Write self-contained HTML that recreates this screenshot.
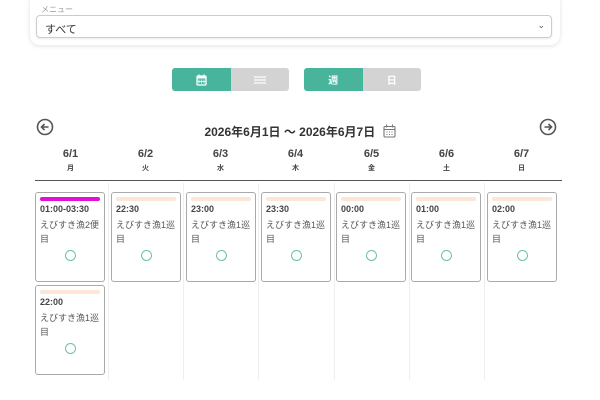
<!DOCTYPE html>
<html><head><meta charset="utf-8"><style>
*{box-sizing:border-box;margin:0;padding:0}
body{width:600px;height:400px;background:#fff;font-family:"Liberation Sans","Noto Sans CJK JP",sans-serif;color:#444;position:relative;overflow:hidden}
.abs{position:absolute}
.panel{left:30px;top:-10px;width:530px;height:55px;background:#fff;border-radius:10px;box-shadow:0 1px 5px rgba(0,0,0,.12)}
.lbl{left:41px;top:4px;font-size:8px;color:#999}
.sel{left:36px;top:15px;width:516px;height:23px;border:1px solid #ccc;border-radius:4px;font-size:11px;padding:5px 8px;color:#333;box-shadow:0 1px 2px rgba(0,0,0,.08)}
.grp{top:68px;height:23px;width:117px;border-radius:3px;overflow:hidden;display:flex}
.grp div{flex:1;display:flex;align-items:center;justify-content:center;font-size:10px;font-weight:bold;color:#fff}
.g{background:#47b49b}.s{background:#d3d3d3}
.title{left:0;width:600px;top:123px;text-align:center;font-size:12px;font-weight:bold;color:#333}
.day{top:148px;width:75px;text-align:center;font-weight:bold;color:#444}
.day b{display:block;font-size:11px}
.day i{display:block;font-style:normal;font-size:7px;margin-top:3px}
.line{left:35px;top:180px;width:527px;height:1px;background:#555}
.vl{top:183px;width:1px;height:197px;background:#eee}
.card{width:70px;height:90px;border:1px solid #aaa;border-radius:3px;padding:4px 4px;background:#fff}
.bar{height:4px;border-radius:2px;background:#fbe6d8;margin-bottom:3px}
.t{font-size:9px;font-weight:bold;color:#444}
.n{font-size:9px;color:#555;line-height:14px;margin-top:4px;word-break:break-all}
.c{width:11px;height:11px;border:1.5px solid #6cbfae;border-radius:50%;margin:4px auto 0}
</style></head><body>
<div class="abs panel"></div>
<div class="abs lbl">メニュー</div>
<div class="abs sel">すべて<span style="position:absolute;right:6px;top:4px;font-size:9px;color:#555">⌄</span></div>
<div class="abs grp" style="left:172px"><div class="g"><svg width="11" height="12" viewBox="0 0 11 12"><rect x="1" y="2" width="9" height="9" rx="1" fill="none" stroke="#fff" stroke-width="1.3"/><rect x="1" y="2" width="9" height="2.5" fill="#fff"/><path d="M3 5.5v4M5.5 5.5v4M8 5.5v4M1.5 7.5h8" stroke="#fff" stroke-width=".8"/><path d="M3 .5v2M8 .5v2" stroke="#fff" stroke-width="1.2"/></svg></div><div class="s"><svg width="12" height="8"><path d="M0 1h12M0 4h12M0 7h12" stroke="#fff" stroke-width="1.3"/></svg></div></div>
<div class="abs grp" style="left:304px"><div class="g">週</div><div class="s">日</div></div>
<svg class="abs" style="left:36px;top:118px" width="18" height="18"><circle cx="9" cy="9" r="7.5" fill="none" stroke="#555" stroke-width="1.6"/><path d="M12.5 9H6M8.5 6L5.5 9l3 3" fill="none" stroke="#555" stroke-width="1.6"/></svg>
<svg class="abs" style="left:539px;top:118px" width="18" height="18"><circle cx="9" cy="9" r="7.5" fill="none" stroke="#555" stroke-width="1.6"/><path d="M5.5 9H12M9.5 6l3 3-3 3" fill="none" stroke="#555" stroke-width="1.6"/></svg>
<div class="abs title">2026年6月1日 〜 2026年6月7日 <svg style="vertical-align:-2px;margin-left:4px" width="13" height="14" viewBox="0 0 13 14"><rect x="1" y="2.5" width="11" height="10.5" rx="1" fill="none" stroke="#777" stroke-width="1.1"/><path d="M1 5.5h11M3.5 8h1M6 8h1M8.5 8h1M3.5 10.5h1M6 10.5h1M8.5 10.5h1M3.5 .5v3M9.5 .5v3" stroke="#777" stroke-width="1.1"/></svg></div>
<div class="abs day" style="left:33px"><b>6/1</b><i>月</i></div>
<div class="abs day" style="left:108px"><b>6/2</b><i>火</i></div>
<div class="abs day" style="left:183px"><b>6/3</b><i>水</i></div>
<div class="abs day" style="left:258px"><b>6/4</b><i>木</i></div>
<div class="abs day" style="left:334px"><b>6/5</b><i>金</i></div>
<div class="abs day" style="left:409px"><b>6/6</b><i>土</i></div>
<div class="abs day" style="left:484px"><b>6/7</b><i>日</i></div>
<div class="abs line"></div>
<div class="abs vl" style="left:108px"></div><div class="abs vl" style="left:183px"></div><div class="abs vl" style="left:258px"></div><div class="abs vl" style="left:334px"></div><div class="abs vl" style="left:409px"></div><div class="abs vl" style="left:484px"></div>
<div class="abs card" style="left:35px;top:192px"><div class="bar" style="background:#e011d6"></div><div class="t">01:00-03:30</div><div class="n">えびすき漁2便目</div><div class="c"></div></div>
<div class="abs card" style="left:111px;top:192px"><div class="bar"></div><div class="t">22:30</div><div class="n">えびすき漁1巡目</div><div class="c"></div></div>
<div class="abs card" style="left:186px;top:192px"><div class="bar"></div><div class="t">23:00</div><div class="n">えびすき漁1巡目</div><div class="c"></div></div>
<div class="abs card" style="left:261px;top:192px"><div class="bar"></div><div class="t">23:30</div><div class="n">えびすき漁1巡目</div><div class="c"></div></div>
<div class="abs card" style="left:336px;top:192px"><div class="bar"></div><div class="t">00:00</div><div class="n">えびすき漁1巡目</div><div class="c"></div></div>
<div class="abs card" style="left:411px;top:192px"><div class="bar"></div><div class="t">01:00</div><div class="n">えびすき漁1巡目</div><div class="c"></div></div>
<div class="abs card" style="left:487px;top:192px"><div class="bar"></div><div class="t">02:00</div><div class="n">えびすき漁1巡目</div><div class="c"></div></div>
<div class="abs card" style="left:35px;top:285px"><div class="bar"></div><div class="t">22:00</div><div class="n">えびすき漁1巡目</div><div class="c"></div></div>
</body></html>
